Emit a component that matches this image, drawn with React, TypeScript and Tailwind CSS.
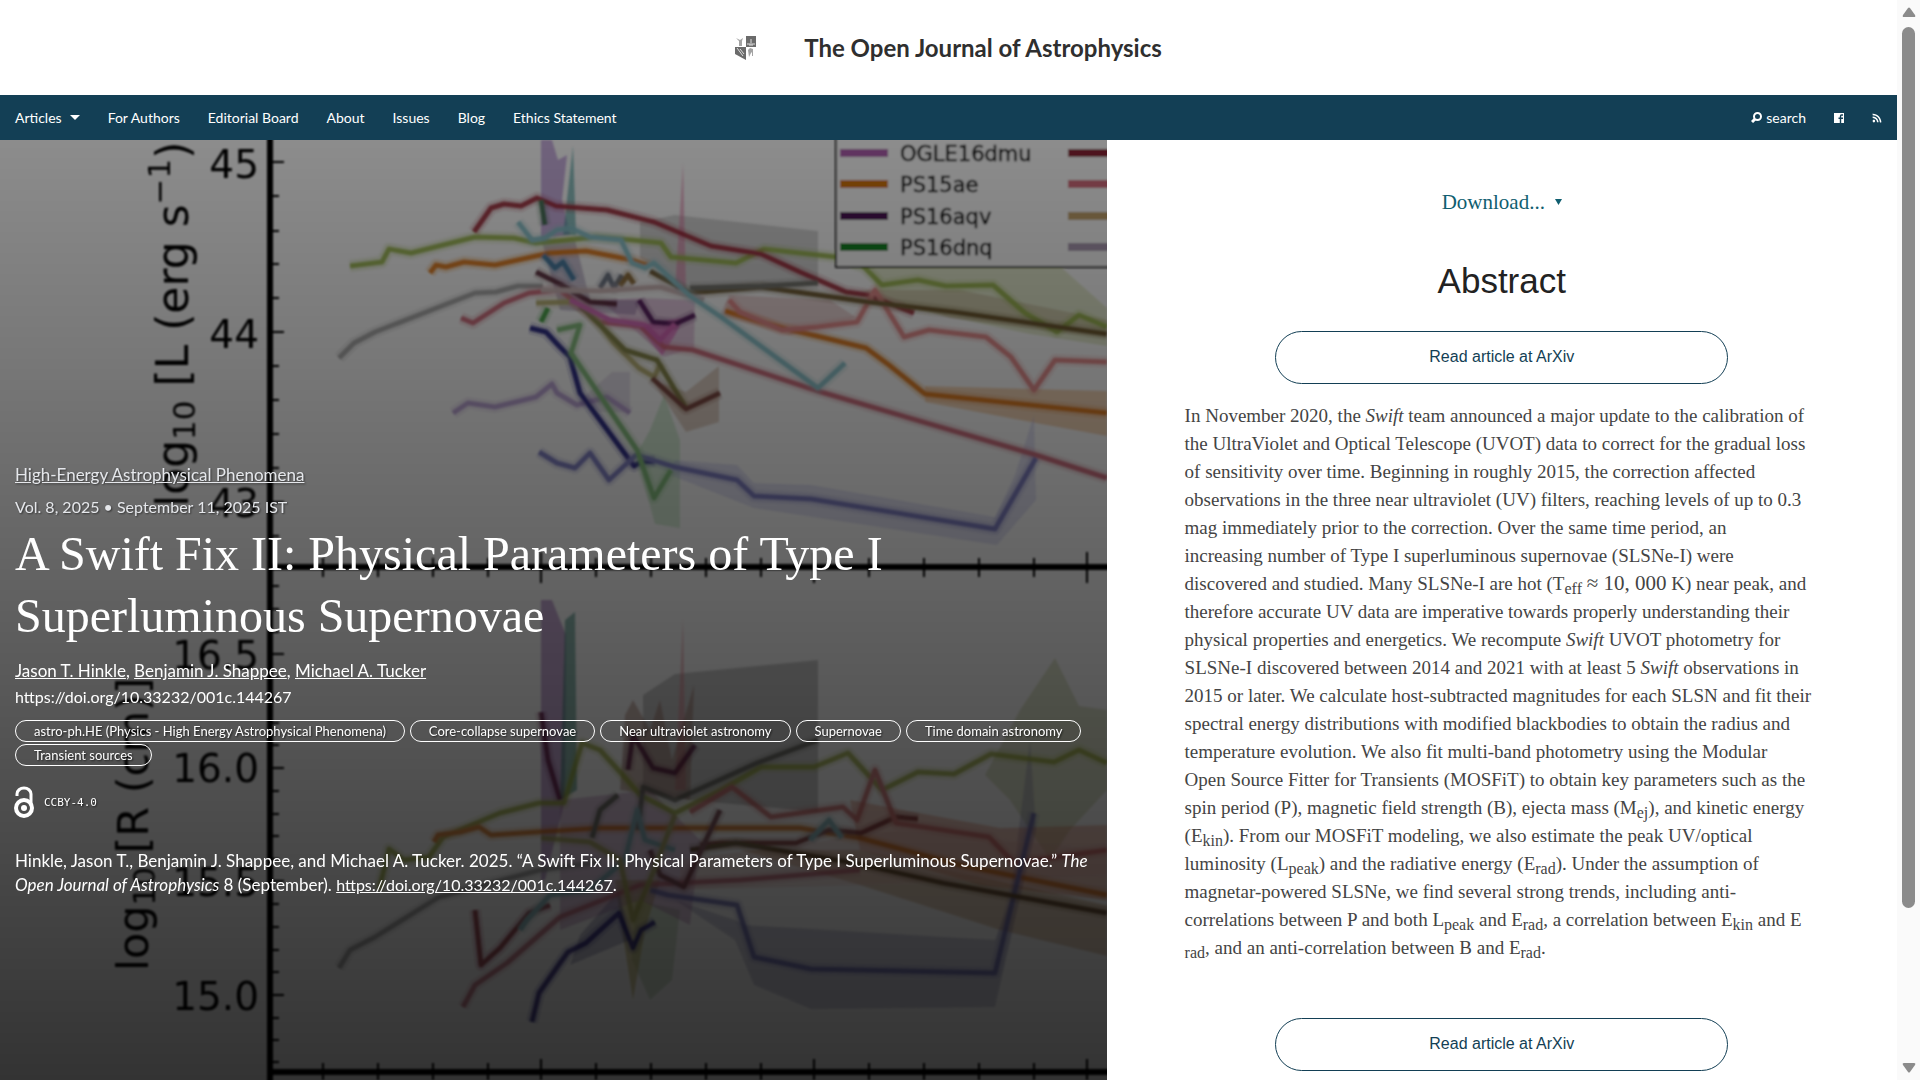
import React from 'react';
import { FaRss } from 'react-icons/fa';

type Curve = {
  color: string;
  points: string;
};

const navItems = ['For Authors', 'Editorial Board', 'About', 'Issues', 'Blog', 'Ethics Statement'];

const keywords = [
  'astro-ph.HE (Physics - High Energy Astrophysical Phenomena)',
  'Core-collapse supernovae',
  'Near ultraviolet astronomy',
  'Supernovae',
  'Time domain astronomy',
  'Transient sources',
];

const bands: Curve[] = [
  // luminosity panel
  { color: '#8a8a8a55', points: '640,222 675,215 818,231 818,285 690,290 640,258' },
  { color: '#a070c888', points: '541,140 552,140 558,160 567,155 562,200 570,235 541,238' },
  { color: '#30909088', points: '563,235 573,146 576,235' },
  { color: '#e070a077', points: '675,290 683,163 686,290' },
  { color: '#b050a044', points: '600,300 640,298 695,300 694,348 664,357 640,335' },
  { color: '#e050b888', points: '640,328 652,322 684,318 675,335 662,356' },
  { color: '#f0b07077', points: '925,386 1107,391 1107,436 1020,420 925,402' },
  { color: '#c8d89066', points: '870,268 1062,268 1107,308 1107,346 1030,334 880,302' },
  { color: '#b8a88866', points: '860,290 960,290 1107,320 1107,338 950,318' },
  { color: '#a0d8a066', points: '636,455 655,524 680,528 680,440 664,395 650,430' },
  { color: '#b0806055', points: '652,380 686,392 719,366 719,422 686,432' },
  { color: '#a0a0e044', points: '675,460 737,465 754,483 811,485 995,517 1015,475 1034,415 1036,500 997,545 754,508 670,475' },
  { color: '#c0b0d055', points: '580,400 612,372 630,372 630,412 600,412' },
  { color: '#d0909055', points: '729,295 830,300 857,318 790,335 720,315' },
  { color: '#50307044', points: '541,238 575,240 590,300 640,300 635,315 560,310' },
  // radius panel
  { color: '#6a6a6a55', points: '643,695 675,674 818,660 818,812 690,800 643,790' },
  { color: '#8a50a877', points: '541,600 552,600 566,635 565,800 545,880 541,880' },
  { color: '#30807088', points: '565,620 575,612 577,790 560,800' },
  { color: '#e0708066', points: '675,790 683,618 686,790' },
  { color: '#90605066', points: '620,790 625,715 633,700 650,730 660,700 672,760 694,685 690,800' },
  { color: '#a8b87055', points: '985,775 1020,710 1055,658 1079,706 1107,710 1107,790 1070,830 1050,860 1010,800' },
  { color: '#8080a855', points: '675,900 735,920 745,925 995,940 1010,900 1030,740 1036,830 995,1007 811,1009 754,985 735,940' },
  { color: '#d0604055', points: '850,800 1000,828 1107,825 1107,900 980,885 860,850' },
  { color: '#b0784055', points: '740,850 860,850 1107,905 1107,956 1000,930 860,885' },
  { color: '#70a06044', points: '635,900 680,910 672,980 650,1000 632,960' },
  { color: '#b0a04077', points: '615,880 660,880 645,930 633,1000 622,930' },
  { color: '#a060a055', points: '560,800 650,790 700,840 690,925 640,900 560,930' },
  { color: '#50508055', points: '580,935 619,890 630,940 570,965' },
  { color: '#e0a8a044', points: '680,860 900,830 1107,850 1107,875 860,885 680,890' },
];

const upperCurves: Curve[] = [
  { color: '#a8a8a8', points: '339,358 354,343 375,332 475,293 496,292 518,286 543,286' },
  { color: '#b9a0d4', points: '453,413 468,403 495,407 536,397 552,384 557,393 577,405 607,397 630,413' },
  { color: '#9cb850', points: '350,266 382,262 389,249 411,253 475,237 514,238 536,243 596,237 632,240 661,243 671,257 736,263 764,249 836,257 864,267 882,285 918,280 946,286 993,285 1025,313 1057,332 1079,315 1107,327' },
  { color: '#e07818', points: '430,273 436,265 446,267 464,262 495,265 536,256 550,253 586,251 632,260 650,266' },
  { color: '#e07818', points: '725,311 782,328 821,337 866,348 889,365 925,394 1107,413' },
  { color: '#a02c3c', points: '474,232 491,208 504,204 521,206 537,198 556,206 607,210 654,222 711,246 761,254 800,272 846,292 868,295 914,313' },
  { color: '#cf6878', points: '461,318 473,323 504,303 529,293 560,290 600,322 640,326 664,347 693,350 821,392 1036,455 1107,478' },
  { color: '#e88888', points: '729,300 740,312 782,330 818,327 857,322 875,290 904,337 929,330 986,337 1011,357 1034,390 1055,360 1107,362' },
  { color: '#6a5428', points: '650,271 690,293 761,287 868,302 954,312 1107,334' },
  { color: '#707068', points: '690,288 761,286 818,283' },
  { color: '#201c80', points: '530,328 546,332 560,347 570,357 580,393 634,466 641,462 655,461' },
  { color: '#7878c0', points: '539,452 557,463 575,468 590,453 609,480 636,455 675,467 737,480 754,496 811,499 995,529 1036,458' },
  { color: '#80bc78', points: '557,330 580,325 571,353 637,450 654,498 671,470' },
  { color: '#b8b070', points: '536,303 570,302 589,310 614,343 639,368 654,377 661,363' },
  { color: '#808040', points: '580,306 600,325 625,350 657,360 686,408' },
  { color: '#784038', points: '652,378 686,409 720,393' },
  { color: '#582838', points: '536,272 560,284 590,302 617,304' },
  { color: '#501858', points: '639,300 653,322 675,324 695,315' },
  { color: '#d868b8', points: '570,300 610,320 645,325 660,340 675,324' },
  { color: '#407050', points: '541,200 545,225' },
  { color: '#40a040', points: '548,308 541,322' },
  { color: '#4078a0', points: '543,255 555,268 563,262 574,280' },
  { color: '#687080', points: '600,288 608,275 614,288 622,275' },
  { color: '#8a6830', points: '620,286 628,275 634,284' },
  { color: '#d0b8b8', points: '541,290 600,291 660,287 704,300' },
  { color: '#88c4cc', points: '518,222 532,240 545,238 557,230 571,228 590,237 621,240 632,263 645,268 654,263 690,296 721,317 818,388 845,363' },
];

const lowerCurves: Curve[] = [
  { color: '#909090', points: '339,968 350,950 375,937 439,897 540,870 600,862' },
  { color: '#98a838', points: '379,890 389,849 404,860 429,857 443,837 500,813 539,803 564,803 582,743 600,750 621,773 640,795 675,813 721,790 761,767 814,767 848,753 882,790 918,772 954,774 991,754 1054,762 1079,750 1107,763' },
  { color: '#d06810', points: '434,842 438,835 460,832 479,827 491,835 536,832 600,828 800,828 860,838 960,865 1107,895' },
  { color: '#801828', points: '475,910 481,965 500,948 529,913 550,905' },
  { color: '#702020', points: '700,845 721,843 796,843 829,830 861,833 896,817 918,819' },
  { color: '#b86070', points: '463,1007 475,985 507,963 560,917 640,885 740,880 860,870' },
  { color: '#c86060', points: '690,812 732,787 771,817 843,807 857,820 875,770 896,823 989,837 1014,863 1107,850' },
  { color: '#181070', points: '532,1022 539,993 560,963 568,952 586,943 619,913 633,948 641,930 655,922' },
  { color: '#6060a8', points: '650,890 668,895 737,905 754,957 811,969 995,973 1034,813' },
  { color: '#4a3010', points: '690,850 736,843 854,863 943,883 1107,913' },
  { color: '#505848', points: '592,838 600,810 618,795' },
  { color: '#585850', points: '638,830 643,787 675,800 757,763 818,740' },
  { color: '#70a8b0', points: '520,930 527,920 550,895 590,890 625,860 637,810 645,840 675,850' },
  { color: '#70a8b0', points: '810,840 829,820 842,838' },
  { color: '#581038', points: '541,712 548,760 560,800' },
  { color: '#501038', points: '628,770 633,735 653,768 675,773 695,745' },
  { color: '#602830', points: '650,850 660,875 684,887 720,810' },
  { color: '#a0a050', points: '541,838 590,842 620,860 633,920 650,880 675,815' },
];

const upperTicks = [162, 196, 231, 264, 298, 332, 366, 400, 434, 468, 502, 536];
const lowerTicks = [586, 609, 632, 654, 677, 700, 723, 745, 768, 791, 814, 836, 859, 881, 904, 927, 950, 972, 995, 1018, 1040, 1062];
const xTicks = [323, 378, 433, 488, 541, 596, 651, 706, 761, 814, 869, 924, 979, 1034, 1087];

const legend = [
  { name: 'OGLE16dmu', color: '#b060b0', next: '#902838', y: 153 },
  { name: 'PS15ae', color: '#d87810', next: '#d87080', y: 184 },
  { name: 'PS16aqv', color: '#501858', next: '#c8a870', y: 216 },
  { name: 'PS16dnq', color: '#188828', next: '#b0a0b8', y: 247 },
];

const CurveLines = ({ curves, opacity }: { curves: Curve[]; opacity: number }) => (
  <g opacity={opacity} fill="none" strokeLinejoin="round">
    {curves.map((c) => (
      <g key={c.points} stroke={c.color}>
        <polyline points={c.points} strokeWidth="12" strokeOpacity="0.2" />
        <polyline points={c.points} strokeWidth="5" />
      </g>
    ))}
  </g>
);

const LightCurves = () => (
  <svg
    className="absolute inset-0 w-full h-full"
    viewBox="0 140 1107 940"
    preserveAspectRatio="xMinYMin slice"
    aria-hidden="true"
  >
    <defs>
      <filter id="soft" x="-5%" y="-5%" width="110%" height="110%">
        <feGaussianBlur stdDeviation="1" />
      </filter>
      <linearGradient id="shade" x1="0" y1="0" x2="0" y2="1">
        <stop offset="0" stopColor="#000" stopOpacity="0.45" />
        <stop offset="1" stopColor="#000" stopOpacity="0.8" />
      </linearGradient>
    </defs>
    <rect x="0" y="140" width="1107" height="940" fill="#fff" />
    <g filter="url(#soft)">
      {bands.map((b) => (
        <polygon key={b.points} points={b.points} fill={b.color} />
      ))}
      <CurveLines curves={upperCurves} opacity={0.9} />
      <CurveLines curves={lowerCurves} opacity={0.75} />
      <g stroke="#000">
        <path d="M270 130V1090" strokeWidth="6" />
        <path d="M270 567H1120M270 1072H1120" strokeWidth="6" />
        {upperTicks.map((y, i) => (
          <path key={y} d={`M270 ${y}h${i % 5 === 0 ? 14 : 9}`} strokeWidth="2" />
        ))}
        {lowerTicks.map((y, i) => (
          <path key={y} d={`M270 ${y}h${i % 5 === 3 ? 14 : 9}`} strokeWidth="2" />
        ))}
        {xTicks.map((x, i) => (
          <path
            key={x}
            d={i % 5 === 4 ? `M${x} 552v31M${x} 1059v21` : `M${x} 558v19M${x} 1063v17`}
            strokeWidth="2"
          />
        ))}
      </g>
      <rect x="836" y="120" width="300" height="147" fill="#fff" stroke="#222" strokeWidth="2" />
      {legend.map((l) => (
        <g key={l.name}>
          <rect x="840" y={l.y - 4} width="48" height="8" fill={l.color} />
          <rect x="1068" y={l.y - 4} width="48" height="8" fill={l.next} />
          <text x="900" y={l.y + 8} fontSize="21" fontFamily="DejaVu Sans" fill="#000" stroke="#000" strokeWidth="0.5">
            {l.name}
          </text>
        </g>
      ))}
      <g fontFamily="DejaVu Sans" fontSize="39" textAnchor="end" fill="#000">
        <text x="259" y="178">45</text>
        <text x="259" y="348">44</text>
        <text x="259" y="517">43</text>
        <text x="259" y="669">16.5</text>
        <text x="259" y="782">16.0</text>
        <text x="259" y="896">15.5</text>
        <text x="259" y="1010">15.0</text>
      </g>
      <g fontFamily="DejaVu Sans" fill="#000">
        <text transform="translate(188 507) rotate(-90)" fontSize="44">
          log<tspan fontSize="31" dy="7">10</tspan>
          <tspan dy="-7"> [L (erg s</tspan>
          <tspan fontSize="31" dy="-18">−1</tspan>
          <tspan dy="18">)</tspan>
        </text>
        <text transform="translate(148 971) rotate(-90)" fontSize="43">
          log<tspan fontSize="30" dy="7">10</tspan>
          <tspan dy="-7"> [R (cm)]</tspan>
        </text>
      </g>
    </g>
    <rect x="0" y="140" width="1107" height="940" fill="url(#shade)" />
  </svg>
);

const Logo = () => (
  <svg width="21" height="24" viewBox="0 0 21 24" aria-hidden="true">
    <path d="M11 0h10v11H11z" fill="#6b6b6b" />
    <path d="M0 11h11v13L0 18z" fill="#6b6b6b" />
    <path d="M1 2l4 2 3-2-1 3v5H4V5z" fill="#a3a3a3" />
    <path d="M12 8h8M14 9h4M16 3v4" stroke="#ddd" strokeWidth="1" />
    <path d="M2 12l6 8M5 13l4 5" stroke="#ddd" strokeWidth="1" />
    <path d="M13 14l2-2 3 1v7h-1v-4l-1 1-2 4z" fill="#a3a3a3" />
  </svg>
);

const OpenAccess = () => (
  <svg width="21" height="33" viewBox="0 0 21 33" fill="none" stroke="#fff" aria-label="Open access">
    <circle cx="11" cy="22" r="8" strokeWidth="4" />
    <circle cx="11" cy="22" r="3" fill="#fff" stroke="none" />
    <path d="M4 10V8a7 6 0 0 1 14 0v12" strokeWidth="3" />
  </svg>
);

const Sub = ({ children }: { children: React.ReactNode }) => (
  <span className="relative top-1 text-[16px] leading-none">{children}</span>
);

const ReadButton = () => (
  <button className="block w-[453px] h-[53px] mx-auto rounded-full border border-[#133f55] pb-0.5 text-base text-[#133f55] font-['Liberation_Sans',sans-serif]">
    Read article at ArXiv
  </button>
);

const Header = () => (
  <header className="h-[95px] shrink-0 flex items-center justify-center gap-12 bg-white">
    <Logo />
    <h1 className="text-2xl font-bold text-[#2f2f2f]">The Open Journal of Astrophysics</h1>
  </header>
);

const NavBar = () => (
  <nav className="h-[45px] shrink-0 flex items-center justify-between px-[15px] bg-[#133f55] text-white text-sm">
    <div className="flex items-center gap-7">
      <button className="flex items-center gap-2">
        Articles
        <svg width="10" height="5" viewBox="0 0 10 5" fill="#fff" aria-hidden="true">
          <path d="M0 0h10L5 5z" />
        </svg>
      </button>
      {navItems.map((item) => (
        <a key={item} href="#">
          {item}
        </a>
      ))}
    </div>
    <div className="flex items-center gap-7">
      <button className="flex items-center gap-1">
        <svg width="11" height="11" viewBox="0 0 11 11" fill="none" stroke="#fff" aria-hidden="true">
          <circle cx="6.500" cy="4.500" r="3.500" strokeWidth="2" />
          <path d="M4 7L1 10" strokeWidth="3" />
        </svg>
        search
      </button>
      <a href="#" aria-label="Facebook">
        <svg width="10" height="10" viewBox="0 0 10 10" aria-hidden="true">
          <path d="M0 0h10v10H0z" fill="#fff" />
          <path d="M9 2H7.500Q6.500 2 6.500 3.500V10M4.500 5.200H9" fill="none" stroke="#133f55" strokeWidth="1.400" />
        </svg>
      </a>
      <a href="#" aria-label="RSS">
        <FaRss size={10} />
      </a>
    </div>
  </nav>
);

const Hero = () => (
  <section className="relative w-7/12 overflow-hidden text-white">
    <LightCurves />
    <div className="relative px-[15px] pt-[323px] text-[17px] leading-6">
      <div className="text-gray-200 text-shadow-[1px_1px_2px_#00000088]">
        <a href="#" className="underline">
          High-Energy Astrophysical Phenomena
        </a>
        <p className="mt-2 text-base">Vol. 8, 2025 • September 11, 2025 IST</p>
      </div>
      <h2 className="mt-1 text-[48px] leading-[62px] font-['Liberation_Serif',serif]">
        A Swift Fix II: Physical Parameters of Type I
        <br />
        Superluminous Supernovae
      </h2>
      <p className="mt-[11px] leading-[26px]">
        <a href="#" className="underline">Jason T. Hinkle</a>, <a href="#" className="underline">Benjamin J. Shappee</a>,{' '}
        <a href="#" className="underline">Michael A. Tucker</a>
        <br />
        <span className="text-base leading-[26px]">https://doi.org/10.33232/001c.144267</span>
      </p>
      <div className="mt-[10px] flex flex-wrap gap-x-[5px] gap-y-0.5">
        {keywords.map((k) => (
          <a
            key={k}
            href="#"
            className="h-[22px] px-[18px] flex items-center rounded-full border border-white text-[13px] text-shadow-[1px_1px_2px_#000000aa]"
          >
            {k}
          </a>
        ))}
      </div>
      <div className="mt-5 -ml-0.5 flex items-center gap-[10px]">
        <OpenAccess />
        <span className="text-[11px] text-shadow-[1px_1px_2px_#000000aa] font-['DejaVu_Sans_Mono',monospace]">
          CCBY-4.0
        </span>
      </div>
      <p className="mt-[30px]">
        Hinkle, Jason T., Benjamin J. Shappee, and Michael A. Tucker. 2025. “A Swift Fix II: Physical Parameters of
        Type I Superluminous Supernovae.” <i>The</i>
        <br />
        <i>Open Journal of Astrophysics</i> 8 (September).{' '}
        <a href="#" className="text-base underline">https://doi.org/10.33232/001c.144267</a>.
      </p>
    </div>
  </section>
);

const Abstract = () => (
  <section className="w-5/12 bg-white">
    <div className="pt-12 flex justify-center">
      <button className="flex items-center gap-[10px] text-[21px] leading-7 text-[#105e70] font-['Liberation_Serif',serif]">
        Download...
        <svg width="7" height="6" viewBox="0 0 7 6" fill="#105e70" aria-hidden="true">
          <path d="M0 0h7L3.500 6z" />
        </svg>
      </button>
    </div>
    <h2 className="mt-[45px] mb-[30px] text-center text-[35px] leading-10 text-[#222] font-['Liberation_Sans',sans-serif]">
      Abstract
    </h2>
    <ReadButton />
    <p className="mt-[18px] ml-[78px] text-[19px] leading-7 whitespace-nowrap text-[#444] font-['Liberation_Serif',serif]">
      In November 2020, the <i>Swift</i> team announced a major update to the calibration of
      <br />
      the UltraViolet and Optical Telescope (UVOT) data to correct for the gradual loss
      <br />
      of sensitivity over time. Beginning in roughly 2015, the correction affected
      <br />
      observations in the three near ultraviolet (UV) filters, reaching levels of up to 0.3
      <br />
      mag immediately prior to the correction. Over the same time period, an
      <br />
      increasing number of Type I superluminous supernovae (SLSNe-I) were
      <br />
      discovered and studied. Many SLSNe-I are hot (T<Sub>eff</Sub>{' '}
      <span className="text-[21px] leading-none">≈ 10, 000</span> K) near peak, and
      <br />
      therefore accurate UV data are imperative towards properly understanding their
      <br />
      physical properties and energetics. We recompute <i>Swift</i> UVOT photometry for
      <br />
      SLSNe-I discovered between 2014 and 2021 with at least 5 <i>Swift</i> observations in
      <br />
      2015 or later. We calculate host-subtracted magnitudes for each SLSN and fit their
      <br />
      spectral energy distributions with modified blackbodies to obtain the radius and
      <br />
      temperature evolution. We also fit multi-band photometry using the Modular
      <br />
      Open Source Fitter for Transients (MOSFiT) to obtain key parameters such as the
      <br />
      spin period (P), magnetic field strength (B), ejecta mass (M<Sub>ej</Sub>), and kinetic energy
      <br />
      (E<Sub>kin</Sub>). From our MOSFiT modeling, we also estimate the peak UV/optical
      <br />
      luminosity (L<Sub>peak</Sub>) and the radiative energy (E<Sub>rad</Sub>). Under the assumption of
      <br />
      magnetar-powered SLSNe, we find several strong trends, including anti-
      <br />
      correlations between P and both L<Sub>peak</Sub> and E<Sub>rad</Sub>, a correlation between E<Sub>kin</Sub> and E
      <br />
      <Sub>rad</Sub>, and an anti-correlation between B and E<Sub>rad</Sub>.
    </p>
    <div className="mt-14">
      <ReadButton />
    </div>
  </section>
);

const ScrollBar = () => (
  <div className="w-[23px] shrink-0 py-[7px] flex flex-col items-center bg-[#fafafa]" aria-hidden="true">
    <svg width="14" height="10" viewBox="0 0 14 10" fill="#8b8b8b">
      <path d="M6 1q1-1 2 0l5 7q1 2-1 2H2Q0 10 1 8z" />
    </svg>
    <div className="flex-1 w-[13px] pt-[10px]">
      <div className="h-[85%] rounded-full bg-[#8b8b8b]" />
    </div>
    <svg width="14" height="10" viewBox="0 0 14 10" fill="#8b8b8b">
      <path d="M6 9q1 1 2 0l5-7q1-2-1-2H2Q0 0 1 2z" />
    </svg>
  </div>
);

const App = () => {
  return (
    <div className="h-screen flex overflow-hidden bg-white font-['Lato',sans-serif]">
      <div className="flex-1 min-w-0 flex flex-col">
        <Header />
        <NavBar />
        <main className="flex-1 min-h-0 flex">
          <Hero />
          <Abstract />
        </main>
      </div>
      <ScrollBar />
    </div>
  );
};

export default App;
